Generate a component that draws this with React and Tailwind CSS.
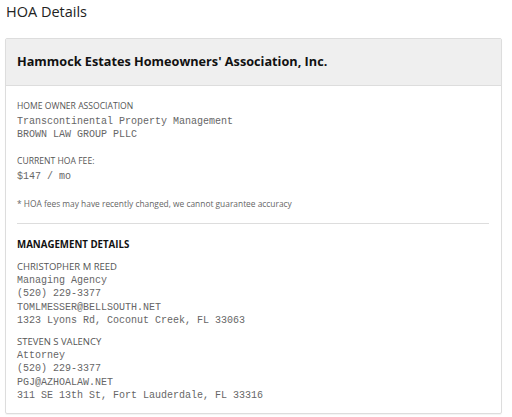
export default function App() {
  const sans = { fontFamily: '"Open Sans", "Noto Sans", sans-serif' }
  const mono = "font-['Liberation_Mono',monospace] text-[10px] leading-[13.5px] text-[#666]"
  const label = 'text-[8.6px] leading-[14px] text-[#555]'

  const people = [
    { name: 'CHRISTOPHER M REED', role: 'Managing Agency', phone: '(520) 229-3377', email: 'TOMLMESSER@BELLSOUTH.NET', addr: '1323 Lyons Rd, Coconut Creek, FL 33063' },
    { name: 'STEVEN S VALENCY', role: 'Attorney', phone: '(520) 229-3377', email: 'PGJ@AZHOALAW.NET', addr: '311 SE 13th St, Fort Lauderdale, FL 33316' },
  ]

  return (
    <div className="w-[512px] h-[417px] bg-white px-[5px] pt-[1px]" style={sans}>
      <h2 className="text-[14.5px] leading-[22px] text-[#222] ml-[1px]">HOA Details</h2>

      <div className="mt-[15px] w-[497px] border border-[#ddd] rounded-[2px] shadow-[0_1px_1px_rgba(0,0,0,0.05)]">
        <div className="h-[47px] bg-[#efefef] border-b border-[#ddd] flex items-center px-[11px]">
          <h3 className="text-[12.7px] font-bold text-[#111]">Hammock Estates Homeowners' Association, Inc.</h3>
        </div>

        <div className="px-[11px] pt-[13px] pb-[10px]">
          <div className={label}>HOME OWNER ASSOCIATION</div>
          <div className={`${mono} leading-[13px] mt-[2px]`}>Transcontinental Property Management</div>
          <div className={`${mono} leading-[13px]`}>BROWN LAW GROUP PLLC</div>

          <div className={`${label} mt-[13px]`}>CURRENT HOA FEE:</div>
          <div className={`${mono} mt-[2px]`}>$147 / mo</div>

          <div className="text-[8.4px] leading-[14px] text-[#666] mt-[13px]">* HOA fees may have recently changed, we cannot guarantee accuracy</div>

          <div className="border-t border-[#ddd] mt-[12px] mr-[1px]" />

          <div className="text-[9.7px] font-bold leading-[14px] text-[#111] mt-[14px]">MANAGEMENT DETAILS</div>

          <div className="mt-[8px] flex flex-col gap-[7px]">
            {people.map(p => (
              <div key={p.name}>
                <div className="text-[9.5px] leading-[13px] text-[#555]">{p.name}</div>
                <div className={`${mono} mt-[1px]`}>{p.role}</div>
                <div className={mono}>{p.phone}</div>
                <div className={mono}>{p.email}</div>
                <div className={mono}>{p.addr}</div>
              </div>
            ))}
          </div>
        </div>
      </div>
    </div>
  )
}
